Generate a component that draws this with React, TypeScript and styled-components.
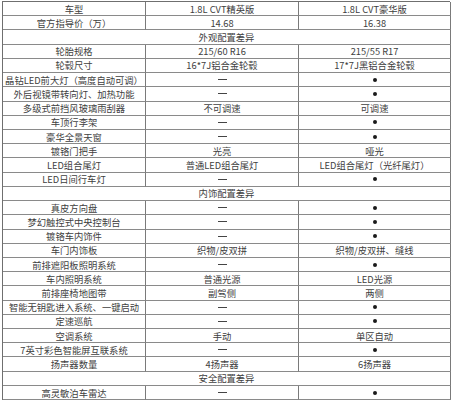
import React from "react";
import styled, { createGlobalStyle } from "styled-components";

const Global = createGlobalStyle`
  html, body { margin: 0; padding: 0; background: #fff; }
  body { font-family: "Noto Sans CJK SC", "Noto Sans", sans-serif; }
`;

const Sheet = styled.div`
  margin: 1px 1px 0 2px;
  width: 448px;
  display: grid;
  grid-template-columns: 143px 153px 152px;
  grid-auto-rows: 14.22px;
  border-top: 1px solid #6f6f6f;
  border-left: 1px solid #6f6f6f;
  box-sizing: border-box;
`;

const Cell = styled.div<{ $span?: boolean }>`
  grid-column: ${(p) => (p.$span ? "1 / -1" : "auto")};
  border-right: 1px solid #7a7a7a;
  border-bottom: 1px solid #8a8a8a;
  display: flex;
  align-items: center;
  justify-content: center;
  font-size: 9.3px;
  line-height: 12px;
  color: #404040;
  white-space: nowrap;
  box-sizing: border-box;
  min-width: 0;
`;

const Dot = styled.span`
  width: 4px;
  height: 4px;
  border-radius: 50%;
  background: #1a1a1a;
  display: inline-block;
`;

const Dash = styled.span`
  display: inline-block;
  width: 9px;
  height: 1px;
  background: #444;
`;

type Row = [string, string, string] | string;

const rows: Row[] = [
  ["车型", "1.8L CVT精英版", "1.8L CVT豪华版"],
  ["官方指导价（万）", "14.68", "16.38"],
  "外观配置差异",
  ["轮胎规格", "215/60 R16", "215/55 R17"],
  ["轮毂尺寸", "16*7J铝合金轮毂", "17*7J黑铝合金轮毂"],
  ["晶钻LED前大灯（高度自动可调）", "-", "o"],
  ["外后视镜带转向灯、加热功能", "-", "o"],
  ["多级式前挡风玻璃雨刮器", "不可调速", "可调速"],
  ["车顶行李架", "-", "o"],
  ["豪华全景天窗", "-", "o"],
  ["镀铬门把手", "光亮", "哑光"],
  ["LED组合尾灯", "普通LED组合尾灯", "LED组合尾灯（光纤尾灯）"],
  ["LED日间行车灯", "-", "o"],
  "内饰配置差异",
  ["真皮方向盘", "-", "o"],
  ["梦幻触控式中央控制台", "-", "o"],
  ["镀铬车内饰件", "-", "o"],
  ["车门内饰板", "织物/皮双拼", "织物/皮双拼、缝线"],
  ["前排遮阳板照明系统", "-", "o"],
  ["车内照明系统", "普通光源", "LED光源"],
  ["前排座椅地图带", "副驾侧", "两侧"],
  ["智能无钥匙进入系统、一键启动", "-", "o"],
  ["定速巡航", "-", "o"],
  ["空调系统", "手动", "单区自动"],
  ["7英寸彩色智能屏互联系统", "-", "o"],
  ["扬声器数量", "4扬声器", "6扬声器"],
  "安全配置差异",
  ["高灵敏泊车雷达", "-", "o"],
];

const renderValue = (v: string) => {
  if (v === "-") return <Dash />;
  if (v === "o") return <Dot />;
  return v;
};

export default function App() {
  return (
    <>
      <Global />
      <Sheet>
        {rows.map((r, i) =>
          typeof r === "string" ? (
            <Cell key={i} $span>
              {r}
            </Cell>
          ) : (
            <React.Fragment key={i}>
              <Cell>{r[0]}</Cell>
              <Cell>{renderValue(r[1])}</Cell>
              <Cell>{renderValue(r[2])}</Cell>
            </React.Fragment>
          )
        )}
      </Sheet>
    </>
  );
}
